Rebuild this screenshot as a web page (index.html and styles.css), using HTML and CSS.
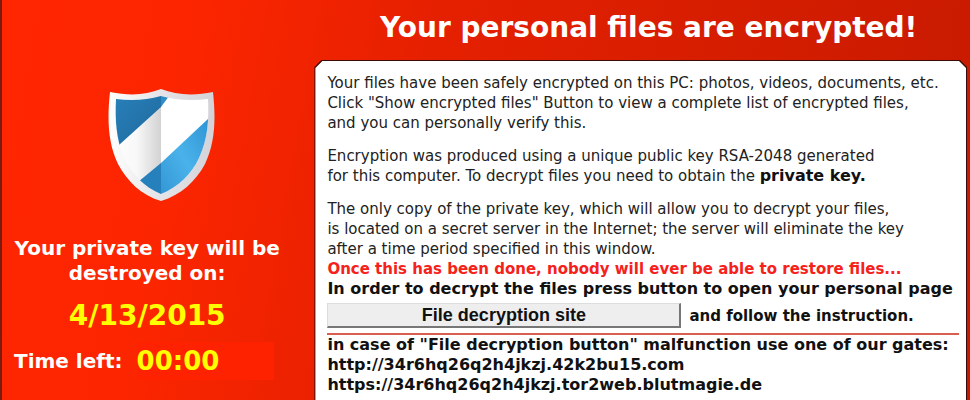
FILE: index.html
```html
<!DOCTYPE html>
<html lang="en">
<head>
  <meta charset="UTF-8">
  <meta name="viewport" content="width=device-width, initial-scale=1.0">
  <title>Your personal files are encrypted!</title>
  <link rel="stylesheet" href="styles.css">
</head>
<body>
  <div class="window">
    <aside class="sidebar">
      <svg class="shield" viewBox="0 0 108 114" aria-hidden="true">
        <defs>
          <linearGradient id="rim" x1="0" y1="0" x2="1" y2="0">
            <stop offset="0" stop-color="#ffffff"/>
            <stop offset="0.45" stop-color="#e6e6ea"/>
            <stop offset="1" stop-color="#d2d2d8"/>
          </linearGradient>
          <linearGradient id="fold" x1="0" y1="0" x2="1" y2="0">
            <stop offset="0" stop-color="#ffffff"/>
            <stop offset="0.55" stop-color="#f8f8f8"/>
            <stop offset="1" stop-color="#d2d2d2"/>
          </linearGradient>
          <linearGradient id="dark" x1="0" y1="0" x2="1" y2="1">
            <stop offset="0" stop-color="#2c83bd"/>
            <stop offset="1" stop-color="#1c699e"/>
          </linearGradient>
          <linearGradient id="light" x1="0" y1="1" x2="1" y2="0">
            <stop offset="0" stop-color="#3194d3"/>
            <stop offset="0.5" stop-color="#4ab2ea"/>
            <stop offset="1" stop-color="#2e94d4"/>
          </linearGradient>
          <clipPath id="face">
            <path d="M9 11C25 13 40 12 54 8C68 12 83 13 101 11C102 31 101 51 92 70C84 87 71 99 54 106C37 99 25 86 17 70C9 51 8 31 9 11Z"/>
          </clipPath>
        </defs>
        <path fill="url(#rim)" d="M3 4C23 8 39 7 54 1C69 7 87 8 106 4C109 32 108 55 98 76C89 93 74 107 54 113C34 107 20 93 11 76C1 55 0 32 3 4Z"/>
        <g clip-path="url(#face)">
          <path fill="#ffffff" d="M54 0H108V114H54Z"/>
          <path fill="url(#fold)" d="M0 0H54V114H0Z"/>
          <path fill="url(#dark)" d="M0 0H54V19L12 57H0Z"/>
          <path fill="#2f8dc8" d="M54 0H68L54 19Z"/>
          <path fill="#2580bc" d="M31 94L54 75V114H31Z"/>
          <path fill="url(#light)" d="M54 75L102 30V114H54Z"/>
        </g>
      </svg>
      <p class="deadline">Your private key will be destroyed on:</p>
      <p class="date">4/13/2015</p>
      <div class="timer">
        <span class="timer-label">Time left:</span>
        <span class="timer-value">00:00</span>
      </div>
    </aside>

    <main class="main">
      <h1>Your personal files are encrypted!</h1>
      <div class="panel">
        <div class="notice">
          <p>Your files have been safely encrypted on this PC: photos, videos, documents, etc.<br>
            Click "Show encrypted files" Button to view a complete list of encrypted files,<br>
            and you can personally verify this.</p>
          <p>Encryption was produced using a unique public key RSA-2048 generated<br>
            for this computer. To decrypt files you need to obtain the <b>private key.</b></p>
          <p>The only copy of the private key, which will allow you to decrypt your files,<br>
            is located on a secret server in the Internet; the server will eliminate the key<br>
            after a time period specified in this window.</p>
          <strong class="warning">Once this has been done, nobody will ever be able to restore files...</strong>
          <div class="action">
            <div>In order to decrypt the files press button to open your personal page</div>
            <div class="action-row">
              <button type="button">File decryption site</button>
              <span>and follow the instruction.</span>
            </div>
          </div>
          <div class="gates">
            in case of "File decryption button" malfunction use one of our gates:<br>
            http://34r6hq26q2h4jkzj.42k2bu15.com<br>
            https://34r6hq26q2h4jkzj.tor2web.blutmagie.de
          </div>
        </div>
      </div>
    </main>
  </div>
</body>
</html>
```
FILE: styles.css
```css
* {
  box-sizing: border-box;
}

body {
  margin: 0;
  font-family: "DejaVu Sans", Verdana, sans-serif;
  font-size: 15px;
  line-height: 20px;
  color: #222;
  background: #cc1b00;
}

p, h1 {
  margin: 0;
}

.window {
  display: flex;
  min-height: 100vh;
  border-left: 2px solid #7a1a10;
  background: linear-gradient(100deg, #ff2600 0%, #fb2500 20%, #e52000 42%, #c61a00 100%);
}

.sidebar {
  display: flex;
  flex-direction: column;
  align-items: center;
  width: 30%;
  padding: 88px 12px 0 12px;
  color: #fff;
  font-weight: bold;
}

.shield {
  width: 108px;
  height: 114px;
  margin-left: 28px;
}

.deadline {
  margin-top: 34px;
  font-size: 20px;
  line-height: 25px;
  text-align: center;
}

.date {
  margin-top: 12px;
  font-size: 28px;
  line-height: 36px;
  color: #ff0;
}

.timer {
  display: flex;
  align-items: center;
  align-self: stretch;
  margin-top: 8px;
  margin-right: 6px;
  font-size: 20px;
}

.timer-value {
  flex: 1;
  margin-left: 14px;
  font-size: 26px;
  line-height: 38px;
  color: #ff0;
  background: #ff2200;
}

.main {
  flex: 1;
  display: flex;
  flex-direction: column;
  padding: 0 3px 0 22px;
}

h1 {
  padding: 8px 0 12px 16px;
  font-size: 28px;
  line-height: 40px;
  text-align: center;
  color: #fff;
}

/* dark outline with cut corners, the notice is the white inside */
.panel {
  flex: 1;
  display: flex;
  padding: 1px 1px 0;
  background: #3a0c08;
  clip-path: polygon(7px 0, calc(100% - 7px) 0, 100% 7px, 100% 100%, 0 100%, 0 7px);
}

.notice {
  flex: 1;
  padding: 12px 7px 3px 12px;
  background: #fff;
  white-space: nowrap;
  clip-path: polygon(7px 0, calc(100% - 7px) 0, 100% 7px, 100% 100%, 0 100%, 0 7px);
}

.notice p + p {
  margin-top: 13px;
}

.notice b,
.action,
.gates {
  font-size: 16px;
  font-weight: bold;
  color: #111;
}

.notice .warning {
  color: #f5221b;
}

.action {
  padding-bottom: 5px;
  border-bottom: 2px solid #d9604f;
}

.action-row {
  display: flex;
  align-items: center;
  gap: 8px;
  margin-top: 4px;
}

.action-row span {
  font-size: 15px;
}

button {
  width: 354px;
  height: 25px;
  padding: 0;
  border: 1px solid #ddd;
  border-right: 2px solid #777;
  border-bottom: 2px solid #777;
  background: #eee;
  font: bold 18px "Liberation Sans", Arial, sans-serif;
  color: #111;
}
```
